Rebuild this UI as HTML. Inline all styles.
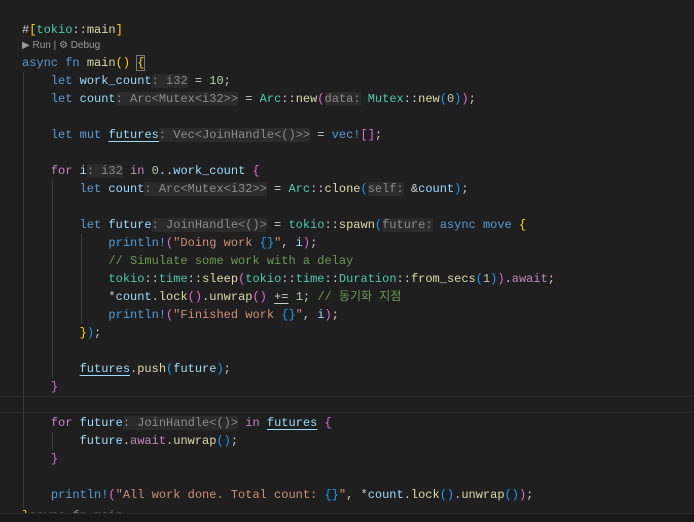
<!DOCTYPE html>
<html><head><meta charset="utf-8"><style>
html,body{margin:0;padding:0;background:#1f1f1f;width:694px;height:522px;overflow:hidden;position:relative}
.l{position:absolute;left:22px;height:18px;line-height:18px;font-family:"Liberation Mono","Noto Sans CJK KR",monospace;font-size:12px;color:#cccccc;white-space:pre}
.k{color:#569cd6}.c{color:#c586c0}.v{color:#9cdcfe}.f{color:#dcdcaa}.t{color:#4ec9b0}.n{color:#b5cea8}.s{color:#ce9178}.cm{color:#6a9955}
.b1{color:#ffd700}.b2{color:#da70d6}.b3{color:#179fff}
.h{background:#2b2b2b;color:#8b8b8b;border-radius:2px}
.u{text-decoration:underline;text-decoration-color:#9cdcfe;text-underline-offset:3px}
.g{position:absolute;width:1px;background:#3c3c3c}
</style></head><body>
<div style="position:absolute;left:0;top:396px;width:694px;height:15px;border-top:1px solid #2c2c2c;border-bottom:1px solid #2c2c2c"></div>
<div class="g" style="left:23px;top:72px;height:436px"></div>
<div class="g" style="left:52px;top:180px;height:198px"></div>
<div class="g" style="left:81px;top:234px;height:90px"></div>
<div class="g" style="left:52px;top:432px;height:18px"></div>
<div class="l" style="top:21px">#<span class="b1">[</span><span class="t">tokio</span>::<span class="f">main</span><span class="b1">]</span></div>
<div class="l" style="top:38px;font-family:'Liberation Sans',sans-serif;font-size:10px;color:#999;height:16px;line-height:16px">▶ Run | ⚙ Debug</div>
<div class="l" style="top:54px"><span class="k">async fn</span> <span class="f">main</span><span class="b1">()</span> <span class="b1" style="outline:1px solid #777">{</span></div>
<div class="l" style="top:72px">    <span class="k">let</span> <span class="v">work_count</span><span class="h">: i32</span> = <span class="n">10</span>;</div>
<div class="l" style="top:90px">    <span class="k">let</span> <span class="v">count</span><span class="h">: Arc&lt;Mutex&lt;i32&gt;&gt;</span> = <span class="t">Arc</span>::<span class="f">new</span><span class="b2">(</span><span class="h">data:</span> <span class="t">Mutex</span>::<span class="f">new</span><span class="b3">(</span><span class="n">0</span><span class="b3">)</span><span class="b2">)</span>;</div>
<div class="l" style="top:126px">    <span class="k">let mut</span> <span class="v u">futures</span><span class="h">: Vec&lt;JoinHandle&lt;()&gt;&gt;</span> = <span class="k">vec!</span><span class="b2">[]</span>;</div>
<div class="l" style="top:162px">    <span class="c">for</span> <span class="v">i</span><span class="h">: i32</span> <span class="c">in</span> <span class="n">0</span>..<span class="v">work_count</span> <span class="b2">{</span></div>
<div class="l" style="top:180px">        <span class="k">let</span> <span class="v">count</span><span class="h">: Arc&lt;Mutex&lt;i32&gt;&gt;</span> = <span class="t">Arc</span>::<span class="f">clone</span><span class="b3">(</span><span class="h">self:</span> &amp;<span class="v">count</span><span class="b3">)</span>;</div>
<div class="l" style="top:216px">        <span class="k">let</span> <span class="v">future</span><span class="h">: JoinHandle&lt;()&gt;</span> = <span class="t">tokio</span>::<span class="f">spawn</span><span class="b3">(</span><span class="h">future:</span> <span class="k">async move</span> <span class="b1">{</span></div>
<div class="l" style="top:234px">            <span class="k">println!</span><span class="b2">(</span><span class="s">"Doing work </span><span class="b3">{}</span><span class="s">"</span>, <span class="v">i</span><span class="b2">)</span>;</div>
<div class="l" style="top:252px">            <span class="cm">// Simulate some work with a delay</span></div>
<div class="l" style="top:270px">            <span class="t">tokio</span>::<span class="t">time</span>::<span class="f">sleep</span><span class="b2">(</span><span class="t">tokio</span>::<span class="t">time</span>::<span class="t">Duration</span>::<span class="f">from_secs</span><span class="b3">(</span><span class="n">1</span><span class="b3">)</span><span class="b2">)</span>.<span class="c">await</span>;</div>
<div class="l" style="top:288px">            *<span class="v">count</span>.<span class="f">lock</span><span class="b2">()</span>.<span class="f">unwrap</span><span class="b2">()</span> <span style="text-decoration:underline;text-underline-offset:3px">+=</span> <span class="n">1</span>; <span class="cm">// 동기화 지점</span></div>
<div class="l" style="top:306px">            <span class="k">println!</span><span class="b2">(</span><span class="s">"Finished work </span><span class="b3">{}</span><span class="s">"</span>, <span class="v">i</span><span class="b2">)</span>;</div>
<div class="l" style="top:324px">        <span class="b1">}</span><span class="b3">)</span>;</div>
<div class="l" style="top:360px">        <span class="v u">futures</span>.<span class="f">push</span><span class="b3">(</span><span class="v">future</span><span class="b3">)</span>;</div>
<div class="l" style="top:378px">    <span class="b2">}</span></div>
<div class="l" style="top:414px">    <span class="c">for</span> <span class="v">future</span><span class="h">: JoinHandle&lt;()&gt;</span> <span class="c">in</span> <span class="v u">futures</span> <span class="b2">{</span></div>
<div class="l" style="top:432px">        <span class="v">future</span>.<span class="c">await</span>.<span class="f">unwrap</span><span class="b3">()</span>;</div>
<div class="l" style="top:450px">    <span class="b2">}</span></div>
<div class="l" style="top:486px">    <span class="k">println!</span><span class="b2">(</span><span class="s">"All work done. Total count: </span><span class="b3">{}</span><span class="s">"</span>, *<span class="v">count</span>.<span class="f">lock</span><span class="b3">()</span>.<span class="f">unwrap</span><span class="b3">()</span><span class="b2">)</span>;</div>
<div style="position:absolute;left:0;top:504px;width:694px;height:9px;overflow:hidden">
<div class="l" style="top:3px;left:22px;color:#888"><span class="b1">}</span><span style="color:#888">async fn main</span></div></div>
<div style="position:absolute;left:0;top:513px;width:694px;height:9px;background:#191919;border-top:1px solid #2a2a2a"></div>
</body></html>
